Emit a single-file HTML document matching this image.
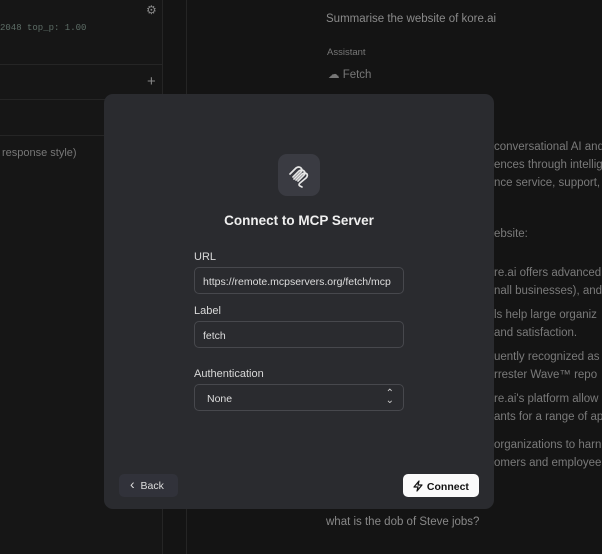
<!DOCTYPE html>
<html><head><meta charset="utf-8"><style>
*{margin:0;padding:0;box-sizing:border-box}
body{width:602px;height:554px;background:#141414;position:relative;overflow:hidden;font-family:"Liberation Sans",sans-serif;color:#777}
.a{position:absolute;white-space:nowrap}
.modal{position:absolute;left:104px;top:94px;width:390px;height:415px;background:#2a2b2f;border-radius:9px}
.lbl{position:absolute;left:90px;font-size:11px;color:#d8d8d8}
.inp{position:absolute;left:90px;width:210px;height:27px;border:1px solid #47484d;border-radius:5px;background:#2a2b2f;font-size:10.5px;color:#ddd;padding:8px 8px;overflow:hidden;white-space:nowrap}
</style></head><body>
<div class="a" style="left:0;top:0;width:162px;height:554px;background:#161616"></div>
<div class="a" style="left:162px;top:0;width:1px;height:554px;background:#252525"></div>
<div class="a" style="left:186px;top:0;width:1px;height:554px;background:#252525"></div>
<div class="a" style="left:0;top:64px;width:162px;height:1px;background:#252525"></div>
<div class="a" style="left:0;top:99px;width:162px;height:1px;background:#252525"></div>
<div class="a" style="left:0;top:135px;width:162px;height:1px;background:#252525"></div>
<div class="a" style="left:0;top:23px;font-family:'Liberation Mono',monospace;font-size:9px;color:#5d6d66">2048 top_p: 1.00</div>
<div class="a" style="left:146px;top:3px;font-size:12px;color:#888">⚙</div>
<div class="a" style="left:147px;top:73px;font-size:15px;color:#888">+</div>
<div class="a" style="left:2px;top:147px;font-size:11px;color:#777">response style)</div>
<div class="a" style="left:326px;top:13px;font-size:11.5px;color:#8a8a8a">Summarise the website of kore.ai</div>
<div class="a" style="left:327px;top:47px;font-size:9.5px;color:#777">Assistant</div>
<div class="a" style="left:328px;top:67px;font-size:11.5px;color:#777">☁ Fetch</div>
<div class="a" style="left:326px;top:516px;font-size:11.5px;color:#888">what is the dob of Steve jobs?</div>
<div class="a" style="left:494px;top:138px;font-size:11.5px;line-height:18px;color:#7a7a7a">conversational AI and<br>ences through intellig<br>nce service, support,</div>
<div class="a" style="left:494px;top:228px;font-size:11.5px;color:#7a7a7a">ebsite:</div>
<div class="a" style="left:494px;top:264px;font-size:11.5px;line-height:18px;color:#7a7a7a">re.ai offers advanced<br>nall businesses), and</div>
<div class="a" style="left:494px;top:306px;font-size:11.5px;line-height:18px;color:#7a7a7a">ls help large organiz<br>and satisfaction.</div>
<div class="a" style="left:494px;top:348px;font-size:11.5px;line-height:18px;color:#7a7a7a">uently recognized as<br>rrester Wave™ repo</div>
<div class="a" style="left:494px;top:390px;font-size:11.5px;line-height:18px;color:#7a7a7a">re.ai's platform allow<br>ants for a range of ap</div>
<div class="a" style="left:494px;top:436px;font-size:11.5px;line-height:18px;color:#7a7a7a">organizations to harn<br>omers and employee</div>
<div class="modal">
 <div class="a" style="left:174px;top:60px;width:42px;height:42px;border-radius:9px;background:#3a3b42">
  <svg width="42" height="42" viewBox="0 0 42 42" fill="none" stroke="#e6e6e6" stroke-width="1.7" stroke-linecap="round" stroke-linejoin="round"><path d="M12 20 L18 14 Q21 12 23 14 Q25 16 23 18 L16 25"/><path d="M15 23 L21 17 Q24 15 26 17 Q28 19 26 21 L20 27"/><path d="M18 26 L24 20 Q27 18 29 20 Q30 22 28 24 L22 29 Q20 31 22 32 L24 33"/></svg>
 </div>
 <div class="a" style="left:0;width:390px;text-align:center;top:119px;font-size:13.5px;font-weight:bold;color:#efefef">Connect to MCP Server</div>
 <div class="lbl" style="top:157px">URL</div>
 <div class="inp" style="top:173px">https://remote.mcpservers.org/fetch/mcp</div>
 <div class="lbl" style="top:211px">Label</div>
 <div class="inp" style="top:227px">fetch</div>
 <div class="lbl" style="top:274px">Authentication</div>
 <div class="inp" style="top:290px;height:27px;padding-left:12px">None<span style="position:absolute;right:9px;top:5px;font-size:10px;line-height:7px;color:#ccc">⌃<br>⌄</span></div>
 <div class="a" style="left:15px;top:380px;width:59px;height:23px;border-radius:5px;background:#31323a;color:#ddd;font-size:10.5px;padding:5px 0 0 11px"><span style="font-size:14px;line-height:10px">‹</span>&nbsp; Back</div>
 <div class="a" style="left:299px;top:380px;width:76px;height:23px;border-radius:5px;background:#fafafa;color:#111;font-size:10.5px;font-weight:bold;padding:6px 0 0 9px"><svg width="12" height="12" viewBox="0 0 12 12" style="vertical-align:-2px" fill="none" stroke="#111" stroke-width="1.2" stroke-linejoin="round"><path d="M7 1 L2 7 H6 L5 11 L10 5 H6 Z"/></svg> Connect</div>
</div>
</body></html>
